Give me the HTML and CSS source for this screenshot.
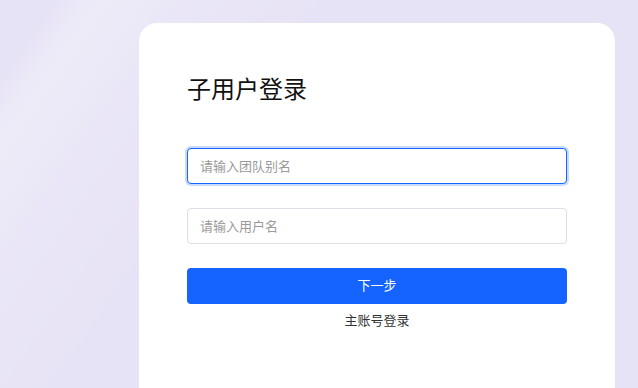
FILE: index.html
```html
<!DOCTYPE html>
<html lang="zh-CN">
<head>
	<meta charset="UTF-8">
	<title>子用户登录</title>
	<link rel="stylesheet" href="styles.css">
</head>
<body>
	<div class="page">
		<div class="card">
			<h1 class="title">子用户登录</h1>
			<form class="form">
				<input class="field focus" type="text" placeholder="请输入团队别名">
				<input class="field" type="text" placeholder="请输入用户名">
				<button class="next" type="button">下一步</button>
				<a class="main-login" href="#">主账号登录</a>
			</form>
		</div>
	</div>
</body>
</html>
```

FILE: styles.css
```css
*{
	box-sizing: border-box;
}
html,body{
	margin: 0;
	height: 100%;
}
body{
	font-family: "Liberation Sans", "Noto Sans CJK SC", sans-serif;
	overflow: hidden;
}
.page{
	height: 100%;
	padding: 23px 0 0 139px;
	background:
		linear-gradient(125deg, rgba(255,255,255,0) 0, rgba(255,255,255,0) 6%, rgba(255,255,255,.3) 11%, rgba(255,255,255,.12) 20%, rgba(255,255,255,0) 38%),
		#e7e3f6;
}
	.card{
		width: 476px;
		height: 100%;
		padding: 49px 48px 0;
		background: #fff;
		border-radius: 18px 18px 0 0;
	}
		.title{
			margin: 0;
			font: 400 24px/32px "Noto Sans CJK SC", sans-serif;
			color: #111;
		}
		.form{
			display: flex;
			flex-direction: column;
			margin-top: 44px;
		}
			.field{
				height: 36px;
				margin-bottom: 24px;
				padding: 0 12px 2px;
				border: 1px solid #dcdfe6;
				border-radius: 4px;
				font: 13px "Noto Sans CJK SC", sans-serif;
				color: #333;
				outline: none;
			}
			.field::placeholder{
				color: #9a9a9a;
			}
			.field.focus{
				border-color: #1664ff;
				box-shadow: 0 0 0 2px #c9dbff;
			}
			.next{
				height: 36px;
				padding: 0 0 3px;
				border: 0;
				border-radius: 4px;
				background: #1664ff;
				color: #fff;
				font: 13px "Noto Sans CJK SC", sans-serif;
			}
			.main-login{
				margin-top: 6px;
				text-align: center;
				font: 13px/20px "Noto Sans CJK SC", sans-serif;
				color: #333;
				text-decoration: none;
			}
```
